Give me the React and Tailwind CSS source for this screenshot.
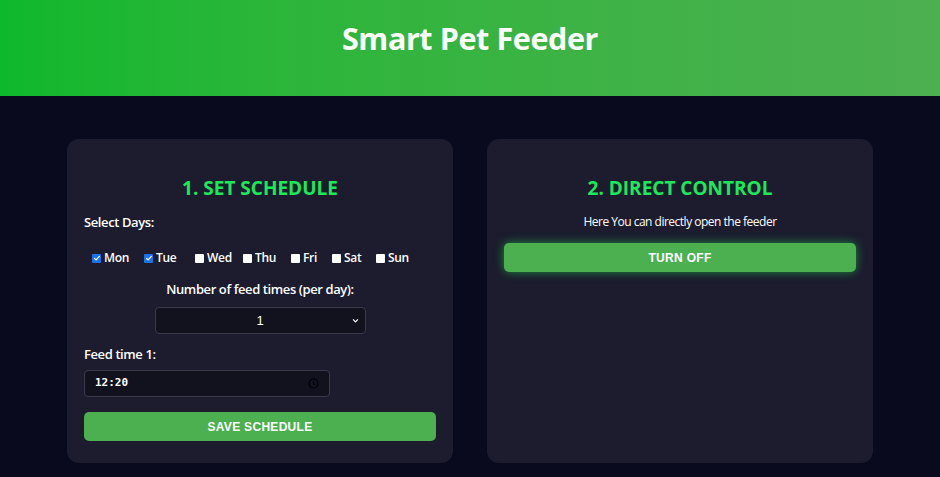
import { useState } from "react";

const days = [
  { name: "Mon", w: "w-[52px]" },
  { name: "Tue", w: "w-[51px]" },
  { name: "Wed", w: "w-[48px]" },
  { name: "Thu", w: "w-[48px]" },
  { name: "Fri", w: "w-[41px]" },
  { name: "Sat", w: "w-[44px]" },
  { name: "Sun", w: "w-[40px]" },
];

const ui = { fontFamily: '"Open Sans", "Noto Sans", sans-serif' };
const btnFont = { fontFamily: '"Liberation Sans", Arial, sans-serif' };

function Check({ checked }) {
  if (checked) {
    return (
      <span className="inline-flex h-[9px] w-[9px] shrink-0 items-center justify-center rounded-[1px] bg-[#1a73e8]">
        <svg viewBox="0 0 12 12" className="h-[8px] w-[8px]">
          <path d="M2 6.3l2.6 2.5 5.4-5.6" fill="none" stroke="#fff" strokeWidth="2" />
        </svg>
      </span>
    );
  }
  return <span className="inline-block h-[9px] w-[9px] shrink-0 rounded-[1px] bg-white" />;
}

export default function App() {
  const [selected, setSelected] = useState(["Mon", "Tue"]);

  const toggle = (d) =>
    setSelected((s) => (s.includes(d) ? s.filter((x) => x !== d) : [...s, d]));

  return (
    <div className="min-h-[477px] bg-[#0a0a1e] text-white" style={ui}>
      <header className="flex h-[96px] items-start justify-center bg-linear-to-r from-[#0db82d] to-[#4caf50] pt-[16px]">
        <h1 className="text-[30.5px] font-bold leading-[44px] tracking-[-0.4px]">Smart Pet Feeder</h1>
      </header>

      <main className="mx-auto mt-[43px] grid w-[806px] grid-cols-2 gap-[34px]">
        {/* schedule card */}
        <section className="flex h-[324px] flex-col rounded-[12px] bg-[#1c1c2e] px-[17px] pt-[35px]">
          <h2 className="text-center text-[19px] font-bold leading-[28px] text-[#1ce85b]">1. SET SCHEDULE</h2>
          <div className="mt-[10px] text-[13px] font-semibold leading-[20px] tracking-[-0.4px]">Select Days:</div>

          <div className="mt-[16px] flex h-[20px] items-center pl-[8px] text-[12px] font-semibold tracking-[-0.3px]">
            {days.map((d) => (
              <label
                key={d.name}
                className={`flex cursor-pointer items-center gap-[3px] ${d.w}`}
                onClick={() => toggle(d.name)}
              >
                <Check checked={selected.includes(d.name)} />
                <span>{d.name}</span>
              </label>
            ))}
          </div>

          <div className="mt-[11px] text-center text-[13px] font-semibold leading-[20px] tracking-[-0.4px]">
            Number of feed times (per day):
          </div>
          <div className="mt-[8px] flex justify-center">
            <div
              className="relative flex h-[27px] w-[211px] items-center justify-center rounded-[4px] border border-[#3a3a4a] bg-[#12121f] text-[13px]"
              style={btnFont}
            >
              1
              <svg viewBox="0 0 10 10" className="absolute right-[6px] h-[7px] w-[7px]">
                <path d="M1.5 3.5L5 7l3.5-3.5" fill="none" stroke="#fff" strokeWidth="1.7" />
              </svg>
            </div>
          </div>

          <div className="mt-[10px] text-[13px] font-semibold leading-[20px] tracking-[-0.4px]">Feed time 1:</div>
          <div className="mt-[6px] flex h-[27px] w-[246px] items-center justify-between rounded-[4px] border border-[#3a3a4a] bg-[#12121f] pl-[10px] pr-[10px]">
            <span
              className="text-[11px] font-bold"
              style={{ fontFamily: '"DejaVu Sans Mono", "Liberation Mono", monospace' }}
            >
              12:20
            </span>
            <svg viewBox="0 0 16 16" className="h-[11px] w-[11px]">
              <circle cx="8" cy="8" r="6.5" fill="none" stroke="#000" strokeWidth="1.7" />
              <path d="M8 4.5V8l2.3 2" fill="none" stroke="#000" strokeWidth="1.7" />
            </svg>
          </div>

          <button
            className="mt-[15px] h-[29px] w-full rounded-[5px] bg-[#4caf50] text-[12px] font-bold tracking-[0.3px] text-white"
            style={btnFont}
          >
            SAVE SCHEDULE
          </button>
        </section>

        {/* direct control card */}
        <section className="flex h-[324px] flex-col rounded-[12px] bg-[#1c1c2e] px-[17px] pt-[35px]">
          <h2 className="text-center text-[19px] font-bold leading-[28px] text-[#1ce85b]">2. DIRECT CONTROL</h2>
          <p className="mt-[10px] text-center text-[12px] leading-[20px] tracking-[-0.5px]">
            Here You can directly open the feeder
          </p>
          <button
            className="mt-[11px] h-[29px] w-full rounded-[5px] bg-[#4caf50] text-[12px] font-bold tracking-[0.3px] text-white shadow-[0_0_10px_rgba(35,230,80,0.55)]"
            style={btnFont}
          >
            TURN OFF
          </button>
        </section>
      </main>
    </div>
  );
}
